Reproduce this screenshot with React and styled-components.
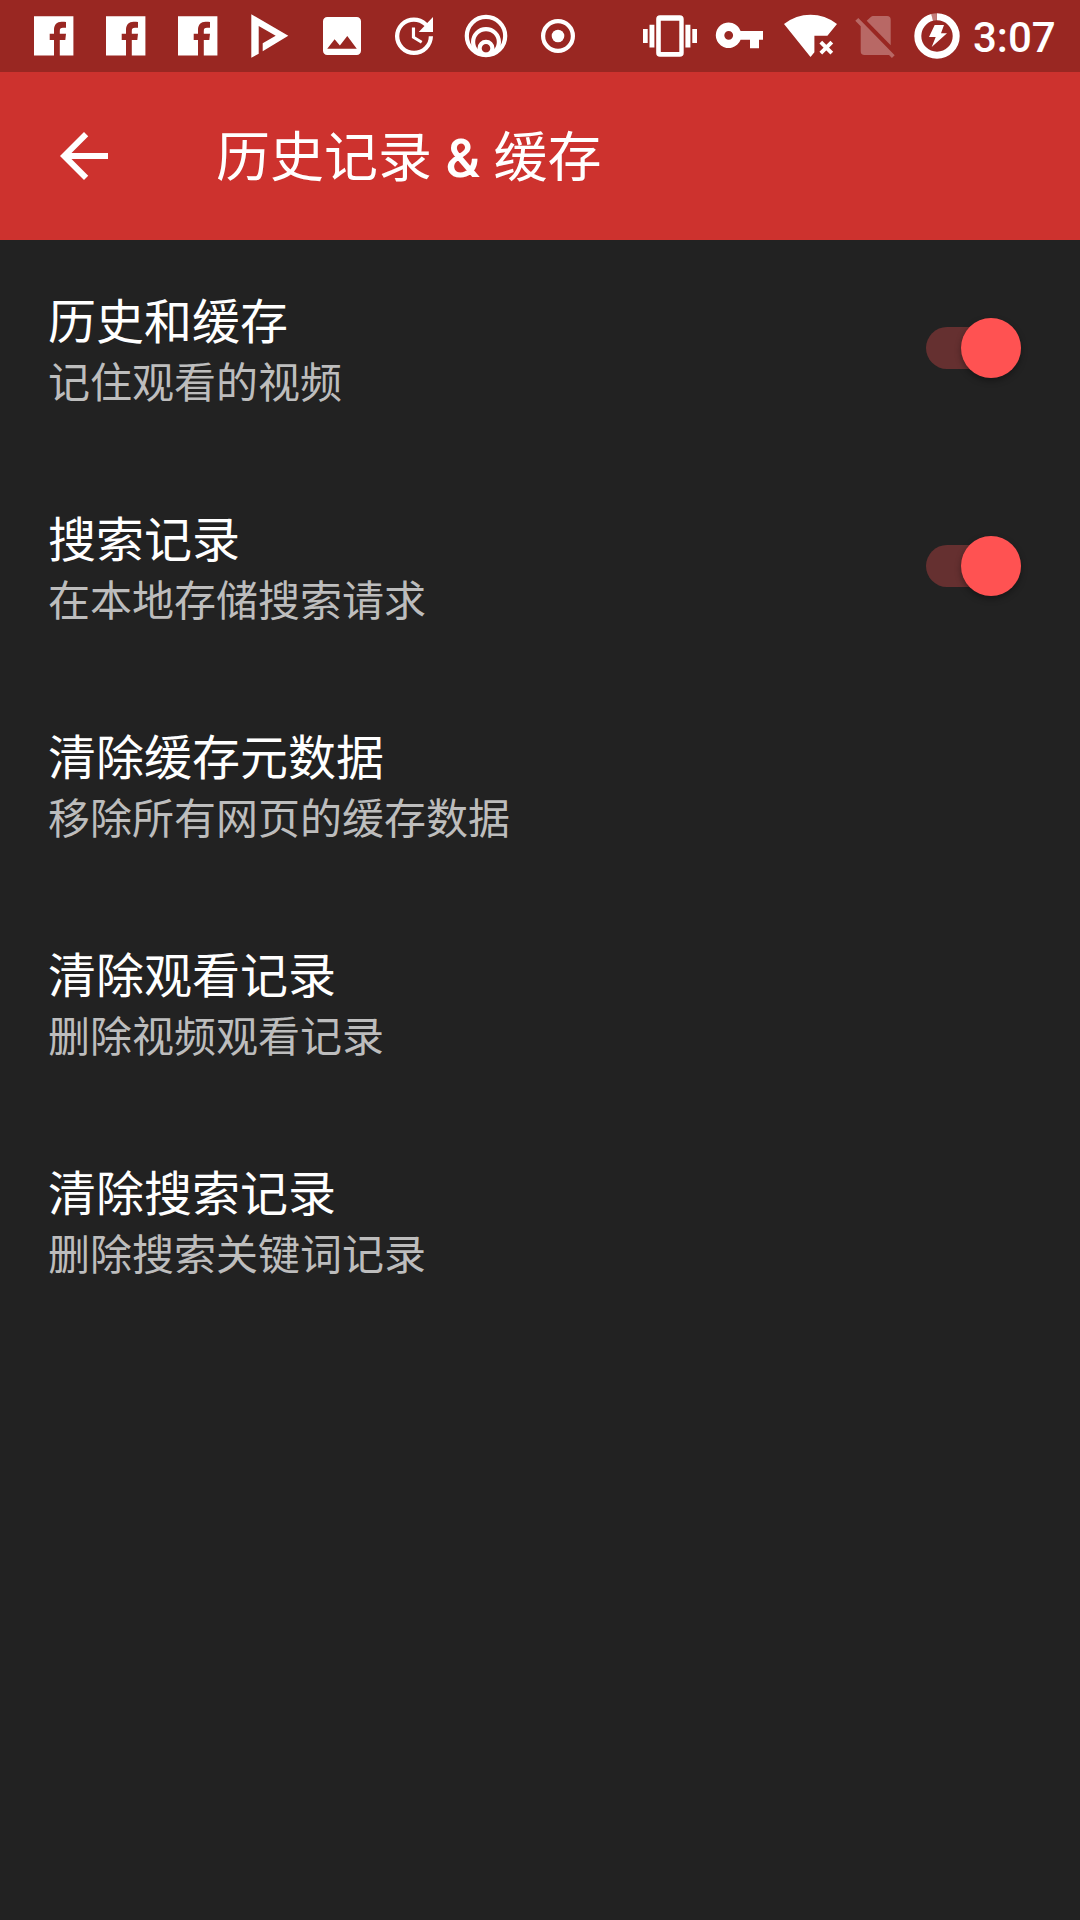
import React from "react";
import styled, { createGlobalStyle } from "styled-components";

const GlobalStyle = createGlobalStyle`
  body { margin: 0; background: #222222; }
  * { box-sizing: border-box; }
`;

const Screen = styled.div`
  width: 1080px;
  height: 1920px;
  display: flex;
  flex-direction: column;
  overflow: hidden;
  background: #222222;
  color: #ffffff;
  font-family: Roboto, "Noto Sans CJK SC", sans-serif;
`;

const StatusBar = styled.header`
  flex: none;
  height: 72px;
  padding: 0 24px 0 18px;
  display: flex;
  justify-content: space-between;
  background: #992722;
`;

const IconGroup = styled.div`
  display: flex;
  align-items: center;
`;

const StatusSvg = styled.svg`
  display: block;
  flex: none;
  width: ${(p) => p.$w}px;
  height: 72px;
  fill: #ffffff;
`;

const Clock = styled.time`
  width: 88px;
  padding: 4px 0 0 5px;
  font-size: 42px;
  font-weight: 500;
  line-height: 72px;
  white-space: nowrap;
`;

const Toolbar = styled.div`
  flex: none;
  height: 168px;
  padding-left: 48px;
  display: flex;
  align-items: center;
  gap: 96px;
  background: #cd322e;
`;

const BackButton = styled.button`
  width: 72px;
  height: 72px;
  padding: 0;
  border: 0;
  background: none;
  svg { display: block; fill: #ffffff; }
`;

const Title = styled.h1`
  margin: 0;
  font-family: "Noto Sans CJK SC", sans-serif;
  font-size: 54px;
  font-weight: 400;
  line-height: 80px;
  white-space: pre;
`;

const Latin = styled.span`
  font-family: Roboto, sans-serif;
  font-weight: 500;
`;

const List = styled.main`
  display: flex;
  flex-direction: column;
`;

const Row = styled.section`
  height: 218px;
  padding: 0 55px 2px 48px;
  display: flex;
  align-items: center;
  justify-content: space-between;
`;

const RowText = styled.div`
  display: flex;
  flex-direction: column;
  padding-bottom: 2px;
  font-family: "Noto Sans CJK SC", sans-serif;
  white-space: nowrap;
`;

const RowTitle = styled.div`
  font-size: 48px;
  line-height: 64px;
`;

const RowSummary = styled.div`
  font-size: 42px;
  line-height: 59px;
  color: #bdbdbd;
`;

const Track = styled.div`
  width: 95px;
  height: 42px;
  margin-right: 4px;
  border-radius: 21px;
  display: flex;
  align-items: center;
  justify-content: flex-end;
  background: #653030;
`;

const Thumb = styled.div`
  flex: none;
  width: 60px;
  height: 60px;
  border-radius: 50%;
  background: #ff5252;
  box-shadow: 0 3px 6px rgba(0, 0, 0, 0.35);
`;

const StatusIcon = ({ w = 72, children }) => (
  <StatusSvg $w={w} viewBox={`0 0 ${w} 72`} aria-hidden="true">
    {children}
  </StatusSvg>
);

const FacebookIcon = () => (
  <StatusIcon>
    <path d="M16 16.2H55.4V55.5H41.8V40H47.3L48 33.7H41.8V31C41.8 29 42.5 27.8 45 27.8H48V22C47 21.8 45.5 21.7 43.5 21.7C39 21.7 36 24.5 36 30V33.7H31.7V40H36V55.5H16z" />
  </StatusIcon>
);

const PlayIcon = () => (
  <StatusIcon>
    <path d="M17.3 14.3L54.3 35.7L28.7 51.3V43.3L41.7 35.7L24.7 26V53.7L17.3 57.7z" />
  </StatusIcon>
);

const ImageIcon = () => (
  <StatusIcon>
    <path
      transform="translate(10.67 10.67) scale(2.111)"
      d="M21 19V5c0-1.1-.9-2-2-2H5c-1.1 0-2 .9-2 2v14c0 1.1.9 2 2 2h14c1.1 0 2-.9 2-2zM8.5 13.5l2.5 3.01L14.5 12l4.5 6H5l3.5-4.5z"
    />
  </StatusIcon>
);

const UpdateIcon = () => (
  <StatusIcon>
    <path
      transform="translate(10.67 10.67) scale(2.111)"
      d="M21 10.12h-6.78l2.74-2.82c-2.73-2.7-7.15-2.8-9.88-.1-2.73 2.71-2.73 7.08 0 9.79s7.15 2.71 9.88 0C18.32 15.65 19 14.08 19 12.1h2c0 1.98-.88 4.55-2.64 6.29-3.51 3.48-9.21 3.48-12.72 0-3.5-3.47-3.53-9.11-.02-12.58s9.14-3.47 12.65 0L21 3v7.12zM12.5 8v4.25l3.5 2.08-.72 1.21L11 13V8h1.5z"
    />
  </StatusIcon>
);

const RingsIcon = () => (
  <StatusIcon>
    <g fill="none" stroke="#ffffff">
      <circle cx="36" cy="36" r="19.2" strokeWidth="4.2" />
      <circle cx="36" cy="42" r="12.9" strokeWidth="4.2" />
      <circle cx="36" cy="48.3" r="6.4" strokeWidth="4.2" />
    </g>
  </StatusIcon>
);

const TargetIcon = () => (
  <StatusIcon>
    <circle cx="36" cy="36" r="14.9" fill="none" stroke="#ffffff" strokeWidth="4.2" />
    <circle cx="36" cy="36" r="6.3" />
  </StatusIcon>
);

const VibrateIcon = () => (
  <StatusIcon w={68}>
    <path
      fillRule="evenodd"
      d="M24 15.2H43.8Q47.7 15.2 47.7 19V53Q47.7 56.8 43.8 56.8H24Q20.2 56.8 20.2 53V19Q20.2 15.2 24 15.2zM24.8 20.7V52H43.3V20.7z"
    />
    <path d="M13.5 24.8h4.9v22.8h-4.9zM7 29h4.7v14H7zM49.4 24.8h5v22.8h-5zM56.3 29H61v14h-4.7z" />
  </StatusIcon>
);

const KeyIcon = () => (
  <StatusIcon w={70}>
    <path
      fillRule="evenodd"
      d="M36.6 30.9H59V39.7H55V48.2H46V39.7H36.6A12.8 12.8 0 1 1 36.6 30.9zM24.7 30.9a4.4 4.4 0 1 0 0 8.8a4.4 4.4 0 1 0 0-8.8z"
    />
  </StatusIcon>
);

const WifiOffIcon = () => (
  <StatusIcon>
    <path d="M10 24Q22 14.8 36.5 14.8T63 24L53.4 35.8H40.4V52.2L36.5 57z" />
    <path d="M46.8 42.2l11 11M57.8 42.2l-11 11" stroke="#ffffff" strokeWidth="3.9" />
  </StatusIcon>
);

const NoSimIcon = () => (
  <StatusIcon w={60}>
    <g opacity="0.3">
      <path d="M9.3 20.8L12.3 18L48.7 55.3L45.9 58L43 55H18.5Q14.7 55 14.7 51.2V26.3z" />
      <path d="M20.7 20.8L24.8 16.9Q25.8 16 27 16H41Q44.7 16 44.7 19.7V45.3z" />
    </g>
  </StatusIcon>
);

const BatteryIcon = () => (
  <StatusIcon w={62}>
    <circle cx="31" cy="36" r="19.2" fill="none" stroke="#ffffff" strokeOpacity="0.4" strokeWidth="7" pathLength="360" strokeDasharray="15 345" transform="rotate(-105 31 36)" />
    <circle cx="31" cy="36" r="19.2" fill="none" stroke="#ffffff" strokeWidth="7" pathLength="360" strokeDasharray="345 15" transform="rotate(-90 31 36)" />
    <path d="M28.7 25H38L35 33.2H41L25.7 47L29.7 37H23z" />
  </StatusIcon>
);

const Switch = () => (
  <Track role="switch" aria-checked="true">
    <Thumb />
  </Track>
);

const preferences = [
  { title: "历史和缓存", summary: "记住观看的视频", toggle: true },
  { title: "搜索记录", summary: "在本地存储搜索请求", toggle: true },
  { title: "清除缓存元数据", summary: "移除所有网页的缓存数据" },
  { title: "清除观看记录", summary: "删除视频观看记录" },
  { title: "清除搜索记录", summary: "删除搜索关键词记录" },
];

export default function App() {
  return (
    <Screen lang="zh-CN">
      <GlobalStyle />
      <StatusBar>
        <IconGroup>
          <FacebookIcon />
          <FacebookIcon />
          <FacebookIcon />
          <PlayIcon />
          <ImageIcon />
          <UpdateIcon />
          <RingsIcon />
          <TargetIcon />
        </IconGroup>
        <IconGroup>
          <VibrateIcon />
          <KeyIcon />
          <WifiOffIcon />
          <NoSimIcon />
          <BatteryIcon />
          <Clock>3:07</Clock>
        </IconGroup>
      </StatusBar>
      <Toolbar>
        <BackButton aria-label="返回">
          <svg width="72" height="72" viewBox="0 0 24 24">
            <path d="M20 11H7.83l5.59-5.59L12 4l-8 8 8 8 1.41-1.41L7.83 13H20v-2z" />
          </svg>
        </BackButton>
        <Title>
          历史记录<Latin> &amp; </Latin>缓存
        </Title>
      </Toolbar>
      <List>
        {preferences.map((item) => (
          <Row key={item.title}>
            <RowText>
              <RowTitle>{item.title}</RowTitle>
              <RowSummary>{item.summary}</RowSummary>
            </RowText>
            {item.toggle && <Switch />}
          </Row>
        ))}
      </List>
    </Screen>
  );
}
